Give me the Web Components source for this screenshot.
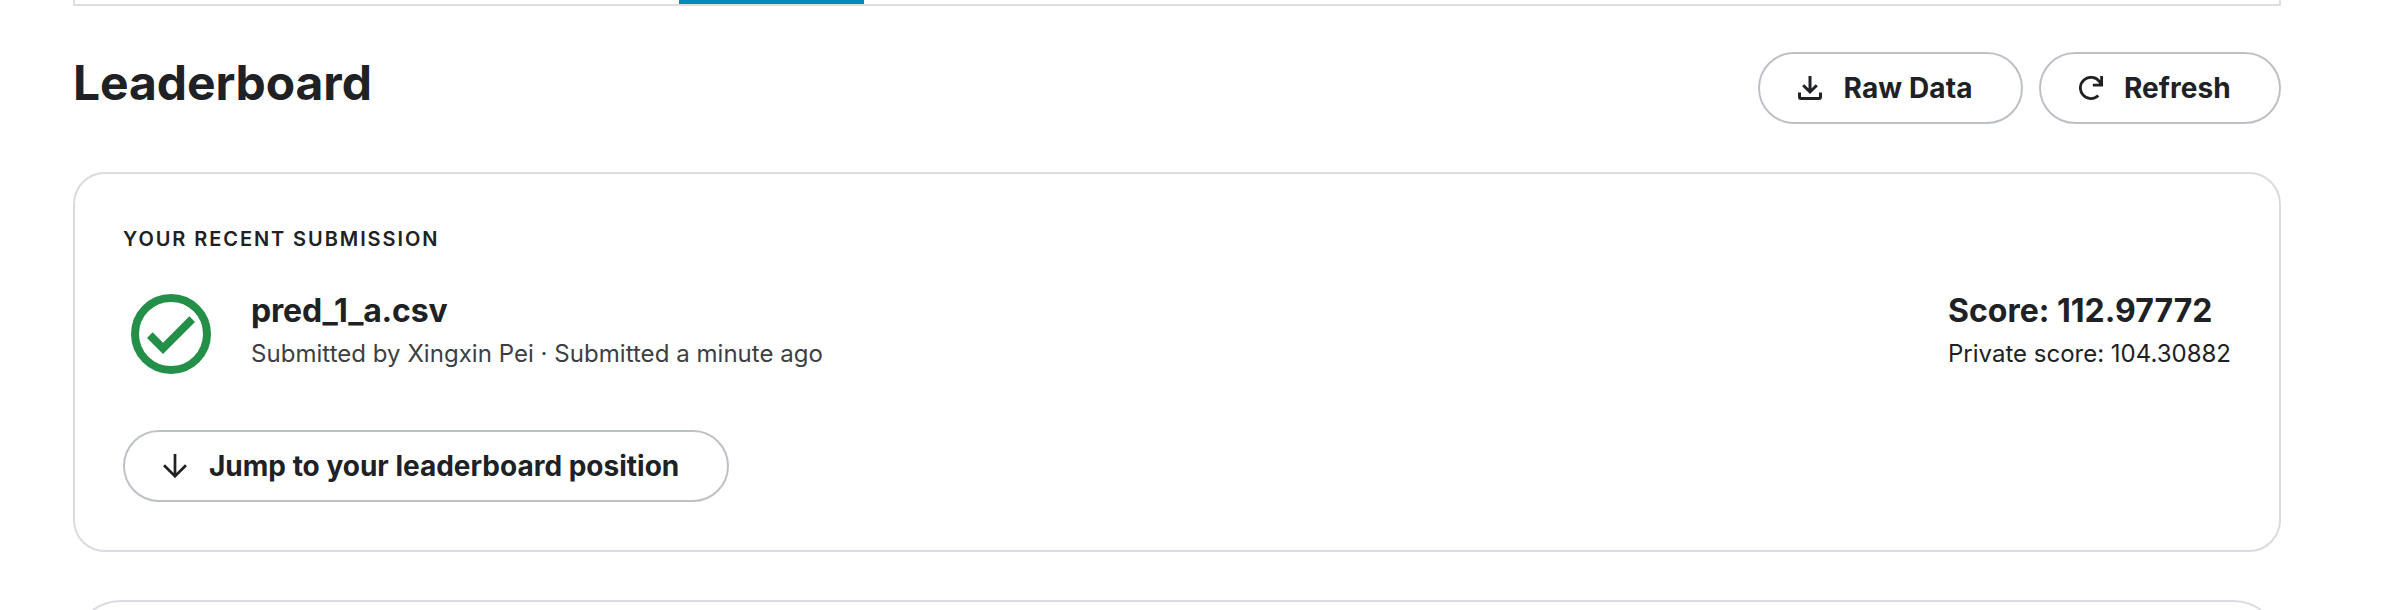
<!DOCTYPE html>
<html lang="en">
<head>
<meta charset="utf-8">
<title>Leaderboard</title>
<style>
  body { margin: 0; background: #fff; color: #202124; font-family: Inter, "Liberation Sans", sans-serif; }
</style>
</head>
<body>
<leaderboard-page></leaderboard-page>
<script>
const define = (name, html) => customElements.define(name, class extends HTMLElement {
  constructor() {
    super();
    const template = document.createElement('template');
    template.innerHTML = html;
    this.attachShadow({ mode: 'open' }).append(template.content.cloneNode(true));
  }
});

define('tab-strip', `
  <style>
    :host { display: flex; box-sizing: border-box; height: 6px; padding-left: 604px; border: 2px solid #dedede; border-top: 0; }
    .active { width: 185px; height: 4px; background: #008abc; }
  </style>
  <div class="active"></div>`);

define('pill-button', `
  <style>
    :host { display: inline-block; }
    button { display: flex; align-items: center; gap: 21px; box-sizing: border-box; width: 100%; height: 72px;
      margin: 0; padding: 0 0 0 38px; border: 2px solid #bdc1c6; border-radius: 36px; background: #fff;
      color: inherit; font: 700 28px Inter, "Liberation Sans", sans-serif; letter-spacing: inherit; white-space: nowrap; }
    ::slotted(svg) { display: block; flex: none; width: 24px; height: 24px; }
  </style>
  <button><slot name="icon"></slot><span><slot></slot></span></button>`);

define('outlined-card', `
  <style>
    :host { display: block; box-sizing: border-box; border: 2px solid #dadbe0; border-radius: 32px; padding: 53px 48px 48px; }
  </style>
  <slot></slot>`);

define('status-icon', `
  <style>
    :host { display: block; flex: none; width: 96px; height: 96px; }
    svg { display: block; }
  </style>
  <svg width="96" height="96" viewBox="0 0 24 24">
    <circle cx="12" cy="12" r="9" fill="none" stroke="#248f48" stroke-width="2"/>
    <path fill="#248f48" d="M16.59 7.58 10 14.17l-2.59-2.58L6 13l4 4 8-8z"/>
  </svg>`);

define('text-pair', `
  <style>
    :host { display: block; white-space: nowrap; }
    .main { font-size: 32px; line-height: 41px; font-weight: 700; letter-spacing: var(--main-spacing, 0); }
    .sub { margin-top: 7px; font-size: 24px; line-height: 31px; color: var(--sub-color, inherit); letter-spacing: var(--sub-spacing, 0); }
  </style>
  <div class="main"><slot name="main"></slot></div>
  <div class="sub"><slot></slot></div>`);

define('recent-submission', `
  <style>
    :host { display: block; }
    .caption { font-size: 20px; line-height: 24px; font-weight: 600; letter-spacing: 1.92px; }
    .row { display: flex; align-items: flex-start; margin: 35px 0 48px; }
    text-pair { margin-top: 4px; }
    .file { margin-left: 32px; --sub-color: #3c4043; --main-spacing: -0.2px; --sub-spacing: 0.04px; }
    .score { margin-left: auto; }
    .jump { width: 606px; }
    .jump svg { margin-right: 1px; }
  </style>
  <div class="caption">YOUR RECENT SUBMISSION</div>
  <div class="row">
    <status-icon></status-icon>
    <text-pair class="file"><span slot="main">pred_1_a.csv</span>Submitted by Xingxin Pei · Submitted a minute ago</text-pair>
    <text-pair class="score"><span slot="main">Score: 112.97772</span>Private score: 104.30882</text-pair>
  </div>
  <pill-button class="jump">
    <svg slot="icon" viewBox="0 0 24 24" fill="none" stroke="#202124" stroke-width="2.7"><path d="M12 0V22M1 11.2 12 22.2 23 11.2"/></svg>Jump to your leaderboard position</pill-button>`);

define('leaderboard-page', `
  <style>
    :host { display: block; box-sizing: border-box; height: 610px; padding: 0 111px 0 73px; overflow: hidden; }
    header { display: flex; align-items: flex-start; gap: 16px; margin-top: 46px; }
    h1 { flex: 1; margin: 0; font-size: 48px; line-height: 61px; font-weight: 700; letter-spacing: -0.1px; }
    .raw { width: 265px; letter-spacing: 0.12px; }
    .raw svg { margin-right: 0.6px; }
    .refresh { width: 242px; letter-spacing: 0.05px; }
    .recent { height: 380px; margin-top: 48px; }
    .table { height: 200px; margin-top: 48px; border-radius: 48px; }
  </style>
  <tab-strip></tab-strip>
  <header>
    <h1>Leaderboard</h1>
    <pill-button class="raw">
      <svg slot="icon" viewBox="0 0 24 24" fill="none" stroke="#202124" stroke-width="3"><path d="M12 0V16M5.2 9.3 12 16 18.8 9.3M1.5 16.5V21Q1.5 22.5 3 22.5H21Q22.5 22.5 22.5 21V16.5"/></svg>Raw Data</pill-button>
    <pill-button class="refresh">
      <svg slot="icon" viewBox="0 0 24 24" fill="none" stroke="#202124" stroke-width="2.8"><path d="M19.3 19.6A10.6 10.6 0 1 1 20.6 5.8L22 8.6M22.6 0V9.1H13.8"/></svg>Refresh</pill-button>
  </header>
  <outlined-card class="recent"><recent-submission></recent-submission></outlined-card>
  <outlined-card class="table"></outlined-card>`);
</script>
</body>
</html>
